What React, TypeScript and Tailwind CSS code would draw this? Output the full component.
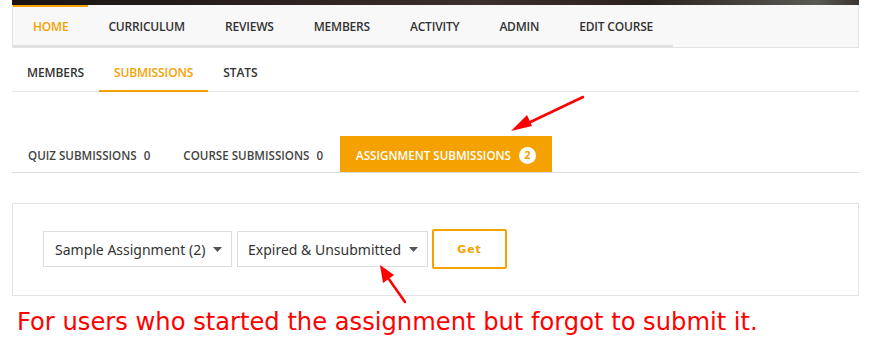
import React from "react";

export default function App() {
  const nav = ["HOME", "CURRICULUM", "REVIEWS", "MEMBERS", "ACTIVITY", "ADMIN", "EDIT COURSE"];
  return (
    <div className="relative w-[888px] h-[359px] bg-white overflow-hidden" style={{ fontFamily: "'Open Sans', sans-serif" }}>
      <div className="ml-[12px] w-[847px]">
        {/* banner strip */}
        <div className="h-[5px] bg-[linear-gradient(90deg,#1a1412_0%,#2a2120_30%,#3b302b_55%,#2a221f_75%,#5a5a55_95%,#3a3330_100%)]" />
        {/* main nav */}
        <div className="h-[43px] bg-[#f8f8f8] border-x border-b border-[#e3e3e3] flex">
          <ul className="flex h-[42px] border-b-2 border-[#e0e0e0] box-border">
            {nav.map((n, i) => (
              <li
                key={n}
                className={`flex items-center px-[20px] pt-[2px] text-[12px] font-semibold tracking-[-0.2px] ${
                  i === 0 ? "text-[#f5a100] border-t-2 border-[#f5a100]" : "text-[#333] border-t-2 border-transparent"
                }`}
              >
                {n}
              </li>
            ))}
          </ul>
        </div>
        {/* sub nav */}
        <div className="h-[44px] flex border-b border-[#e6e6e6]">
          {["MEMBERS", "SUBMISSIONS", "STATS"].map((n) => (
            <div
              key={n}
              className={`flex items-center px-[15px] pt-[7px] text-[12px] font-semibold tracking-[-0.1px] border-b-2 -mb-px ${
                n === "SUBMISSIONS" ? "text-[#f5a100] border-[#f5a100]" : "text-[#333] border-transparent"
              }`}
            >
              {n}
            </div>
          ))}
        </div>
        {/* tabs */}
        <div className="mt-[44px] h-[37px] flex border-b border-[#dcdcdc]">
          <div className="flex items-center px-[16px] pt-[3px] text-[11.6px] font-semibold text-[#444] gap-[7px]">
            <span>QUIZ SUBMISSIONS</span>
            <span>0</span>
          </div>
          <div className="flex items-center px-[17px] pt-[3px] text-[11.6px] font-semibold text-[#444] gap-[7px]">
            <span>COURSE SUBMISSIONS</span>
            <span>0</span>
          </div>
          <div className="flex items-center px-[16px] pt-[3px] text-[11.6px] font-semibold text-white bg-[#f5a100] gap-[8px]">
            <span>ASSIGNMENT SUBMISSIONS</span>
            <span className="w-[17px] h-[17px] rounded-full bg-white text-[#f5a100] flex items-center justify-center text-[11px] font-bold">2</span>
          </div>
        </div>
        {/* panel */}
        <div className="mt-[30px] border border-[#e3e3e3] pt-[25px] pb-[26px] pl-[30px] flex items-center">
          <div className="w-[189px] h-[36px] border border-[#dddddd] flex items-center justify-between pl-[11px] pr-[9px] text-[14px] text-[#333]" style={{ fontFamily: "'Noto Sans', sans-serif" }}>
            <span>Sample Assignment (2)</span>
            <svg width="9" height="5" viewBox="0 0 9 5"><path d="M0 0h9L4.5 5z" fill="#555" /></svg>
          </div>
          <div className="ml-[5px] w-[191px] h-[36px] border border-[#dddddd] flex items-center justify-between pl-[10px] pr-[9px] text-[14px] text-[#333]" style={{ fontFamily: "'Noto Sans', sans-serif" }}>
            <span>Expired &amp; Unsubmitted</span>
            <svg width="9" height="5" viewBox="0 0 9 5"><path d="M0 0h9L4.5 5z" fill="#555" /></svg>
          </div>
          <button className="ml-[4px] w-[75px] h-[40px] pt-[2px] border-2 border-[#f5a100] rounded-[2px] text-[#f5a100] text-[11px] font-bold tracking-[1px]" style={{ fontFamily: "'DejaVu Sans', sans-serif" }}>
            Get
          </button>
        </div>
        <div className="mt-[12px] ml-[5px] text-[24.2px] text-[#ff0000] leading-[28px] whitespace-nowrap" style={{ fontFamily: "'DejaVu Sans', sans-serif" }}>
          For users who started the assignment but forgot to submit it.
        </div>
      </div>
      {/* annotation arrows */}
      <svg className="absolute left-0 top-0 pointer-events-none" width="888" height="359">
        <line x1="583" y1="97" x2="522" y2="126" stroke="#ff0000" strokeWidth="2.5" strokeLinecap="round" />
        <path d="M511 131 L527 115 L532 126 Z" fill="#ff0000" />
        <line x1="405" y1="302" x2="386" y2="275" stroke="#ff0000" strokeWidth="2.5" strokeLinecap="round" />
        <path d="M380 265 L383 283 L394 275 Z" fill="#ff0000" />
      </svg>
    </div>
  );
}
